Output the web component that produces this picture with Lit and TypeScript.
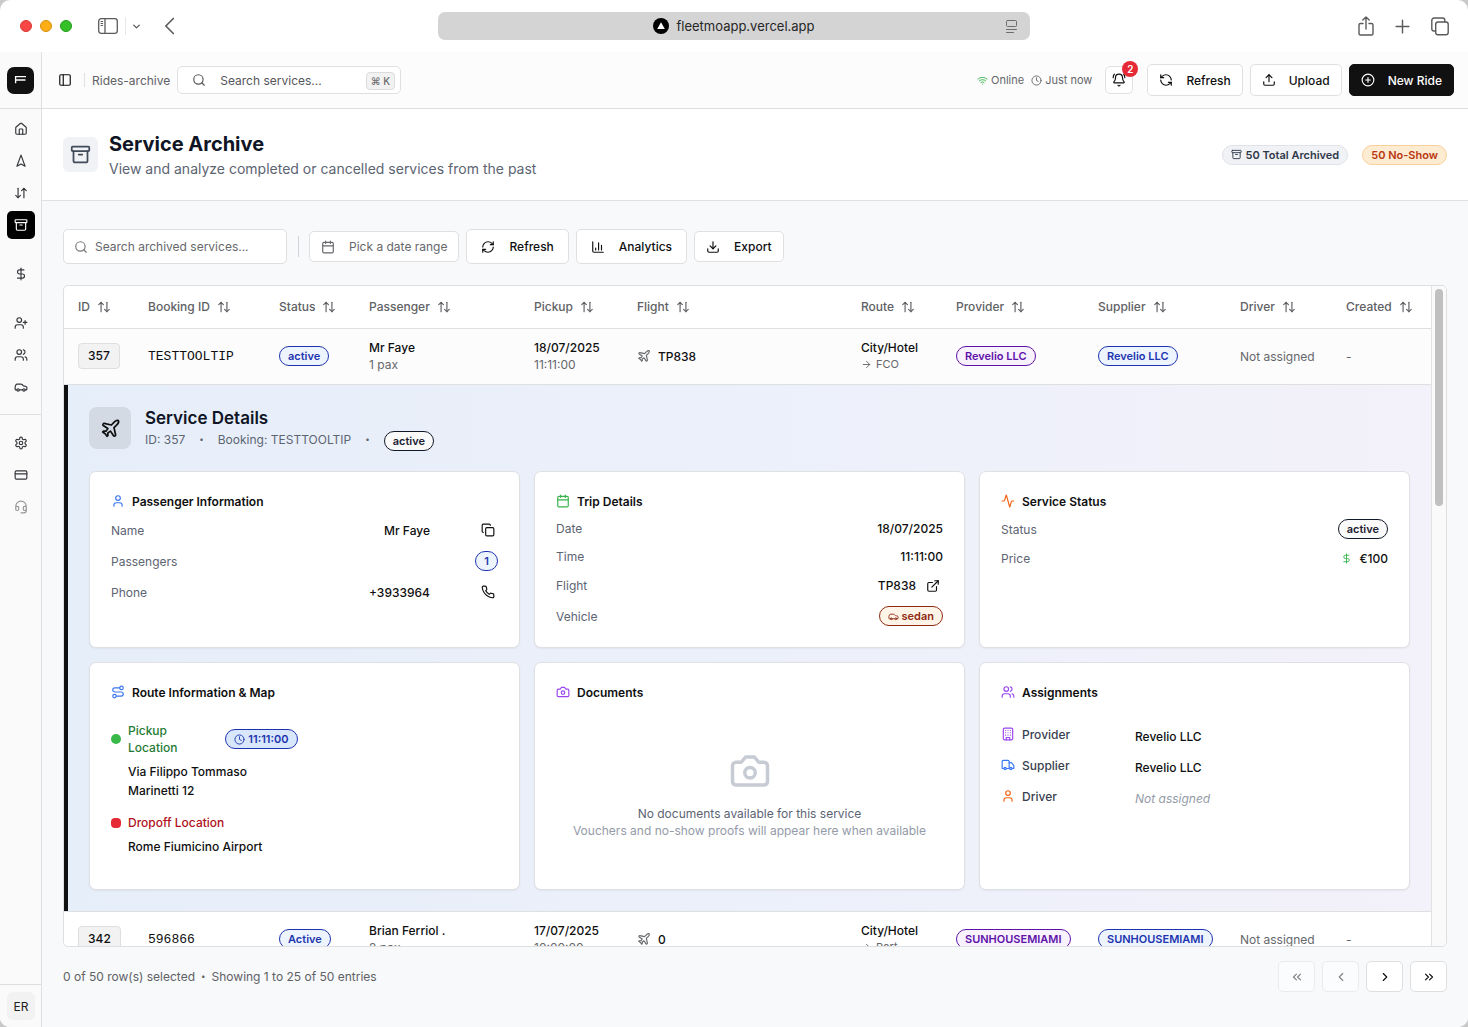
import { LitElement, html, css, svg, nothing } from "lit";
import type { TemplateResult } from "lit";
import { customElement, property } from "lit/decorators.js";

const ICONS: Record<string, TemplateResult> = {
  home: svg`<path d="M15 21v-8a1 1 0 0 0-1-1h-4a1 1 0 0 0-1 1v8"/><path d="M3 10a2 2 0 0 1 .709-1.528l7-5.999a2 2 0 0 1 2.582 0l7 5.999A2 2 0 0 1 21 10v9a2 2 0 0 1-2 2H5a2 2 0 0 1-2-2z"/>`,
  navigation: svg`<path d="m12 2 7 19-7-4-7 4z"/>`,
  arrowDownUp: svg`<path d="m3 16 4 4 4-4"/><path d="M7 20V4"/><path d="m21 8-4-4-4 4"/><path d="M17 4v16"/>`,
  sort: svg`<path d="m21 16-4 4-4-4"/><path d="M17 20V4"/><path d="m3 8 4-4 4 4"/><path d="M7 4v16"/>`,
  archive: svg`<rect width="20" height="5" x="2" y="3" rx="1"/><path d="M4 8v11a2 2 0 0 0 2 2h12a2 2 0 0 0 2-2V8"/><path d="M10 12h4"/>`,
  dollar: svg`<path d="M12 2v20"/><path d="M17 5H9.500a3.500 3.500 0 0 0 0 7h5a3.500 3.500 0 0 1 0 7H6"/>`,
  userPlus: svg`<path d="M16 21v-2a4 4 0 0 0-4-4H6a4 4 0 0 0-4 4v2"/><circle cx="9" cy="7" r="4"/><path d="M19 8v6M22 11h-6"/>`,
  users: svg`<path d="M16 21v-2a4 4 0 0 0-4-4H6a4 4 0 0 0-4 4v2"/><circle cx="9" cy="7" r="4"/><path d="M22 21v-2a4 4 0 0 0-3-3.870"/><path d="M16 3.130a4 4 0 0 1 0 7.750"/>`,
  user: svg`<path d="M19 21v-2a4 4 0 0 0-4-4H9a4 4 0 0 0-4 4v2"/><circle cx="12" cy="7" r="4"/>`,
  car: svg`<path d="M19 17h2c.6 0 1-.4 1-1v-3c0-.9-.7-1.700-1.500-1.900C18.700 10.600 16 10 16 10s-1.300-1.400-2.200-2.300c-.5-.4-1.100-.7-1.800-.7H5c-.6 0-1.100.4-1.400.9l-1.400 2.900A3.700 3.700 0 0 0 2 12v4c0 .6.4 1 1 1h2"/><circle cx="7" cy="17" r="2"/><path d="M9 17h6"/><circle cx="17" cy="17" r="2"/>`,
  settings: svg`<path d="M12.220 2h-.44a2 2 0 0 0-2 2v.18a2 2 0 0 1-1 1.730l-.43.25a2 2 0 0 1-2 0l-.15-.08a2 2 0 0 0-2.730.73l-.22.38a2 2 0 0 0 .73 2.730l.15.1a2 2 0 0 1 1 1.720v.51a2 2 0 0 1-1 1.740l-.15.09a2 2 0 0 0-.73 2.730l.22.38a2 2 0 0 0 2.730.73l.15-.08a2 2 0 0 1 2 0l.43.25a2 2 0 0 1 1 1.730V20a2 2 0 0 0 2 2h.44a2 2 0 0 0 2-2v-.18a2 2 0 0 1 1-1.730l.43-.25a2 2 0 0 1 2 0l.15.08a2 2 0 0 0 2.730-.73l.22-.39a2 2 0 0 0-.73-2.730l-.15-.08a2 2 0 0 1-1-1.740v-.5a2 2 0 0 1 1-1.740l.15-.09a2 2 0 0 0 .73-2.730l-.22-.38a2 2 0 0 0-2.730-.73l-.15.08a2 2 0 0 1-2 0l-.43-.25a2 2 0 0 1-1-1.730V4a2 2 0 0 0-2-2z"/><circle cx="12" cy="12" r="3"/>`,
  card: svg`<rect width="20" height="14" x="2" y="5" rx="2"/><path d="M2 10h20"/>`,
  headset: svg`<path d="M3 11h3a2 2 0 0 1 2 2v3a2 2 0 0 1-2 2H5a2 2 0 0 1-2-2v-5Zm0 0a9 9 0 1 1 18 0m0 0v5a2 2 0 0 1-2 2h-1a2 2 0 0 1-2-2v-3a2 2 0 0 1 2-2h3Z"/><path d="M21 16v2a4 4 0 0 1-4 4h-5"/>`,
  panel: svg`<rect width="18" height="18" x="3" y="3" rx="2"/><path d="M9 3v18"/>`,
  search: svg`<circle cx="11" cy="11" r="8"/><path d="m21 21-4.300-4.300"/>`,
  wifi: svg`<path d="M12 20h.01"/><path d="M2 8.820a15 15 0 0 1 20 0"/><path d="M5 12.860a10 10 0 0 1 14 0"/><path d="M8.500 16.430a5 5 0 0 1 7 0"/>`,
  clock: svg`<circle cx="12" cy="12" r="10"/><path d="M12 6v6l4 2"/>`,
  bell: svg`<path d="M10.270 21a2 2 0 0 0 3.460 0"/><path d="M22 8c0-2.300-.8-4.300-2-6"/><path d="M3.260 15.330A1 1 0 0 0 4 17h16a1 1 0 0 0 .74-1.670C19.410 13.960 18 12.500 18 8A6 6 0 0 0 6 8c0 4.500-1.410 5.960-2.740 7.330"/><path d="M4 2C2.800 3.700 2 5.700 2 8"/>`,
  refreshCcw: svg`<path d="M21 12a9 9 0 0 0-9-9 9.750 9.750 0 0 0-6.740 2.740L3 8"/><path d="M3 3v5h5"/><path d="M3 12a9 9 0 0 0 9 9 9.750 9.750 0 0 0 6.740-2.740L21 16"/><path d="M16 16h5v5"/>`,
  refreshCw: svg`<path d="M3 12a9 9 0 0 1 9-9 9.750 9.750 0 0 1 6.740 2.740L21 8"/><path d="M21 3v5h-5"/><path d="M21 12a9 9 0 0 1-9 9 9.750 9.750 0 0 1-6.740-2.740L3 16"/><path d="M8 16H3v5"/>`,
  upload: svg`<path d="M21 15v4a2 2 0 0 1-2 2H5a2 2 0 0 1-2-2v-4"/><path d="m17 8-5-5-5 5"/><path d="M12 3v12"/>`,
  download: svg`<path d="M21 15v4a2 2 0 0 1-2 2H5a2 2 0 0 1-2-2v-4"/><path d="m7 10 5 5 5-5"/><path d="M12 15V3"/>`,
  plusCircle: svg`<circle cx="12" cy="12" r="10"/><path d="M8 12h8M12 8v8"/>`,
  calendar: svg`<path d="M8 2v4M16 2v4"/><rect width="18" height="18" x="3" y="4" rx="2"/><path d="M3 10h18"/>`,
  chart: svg`<path d="M3 3v16a2 2 0 0 0 2 2h16"/><path d="M18 17V9M13 17V5M8 17v-3"/>`,
  plane: svg`<path d="M17.800 19.200 16 11l3.500-3.500C21 6 21.500 4 21 3c-1-.5-3 0-4.500 1.500L13 8 4.800 6.200c-.5-.1-.9.1-1.100.5l-.3.5c-.2.5-.1 1 .3 1.300L9 12l-2 3H4l-1 1 3 2 2 3 1-1v-3l3-2 3.500 5.300c.3.4.8.5 1.300.3l.5-.2c.4-.3.6-.7.5-1.200z"/>`,
  arrowRight: svg`<path d="M5 12h14"/><path d="m12 5 7 7-7 7"/>`,
  copy: svg`<rect width="14" height="14" x="8" y="8" rx="2"/><path d="M4 16c-1.100 0-2-.9-2-2V4c0-1.100.9-2 2-2h10c1.100 0 2 .9 2 2"/>`,
  phone: svg`<path d="M22 16.920v3a2 2 0 0 1-2.180 2 19.790 19.790 0 0 1-8.630-3.070 19.500 19.500 0 0 1-6-6 19.790 19.790 0 0 1-3.070-8.670A2 2 0 0 1 4.110 2h3a2 2 0 0 1 2 1.720 12.840 12.840 0 0 0 .7 2.810 2 2 0 0 1-.45 2.110L8.090 9.910a16 16 0 0 0 6 6l1.270-1.270a2 2 0 0 1 2.110-.45 12.840 12.840 0 0 0 2.810.7A2 2 0 0 1 22 16.920z"/>`,
  external: svg`<path d="M15 3h6v6"/><path d="M10 14 21 3"/><path d="M18 13v6a2 2 0 0 1-2 2H5a2 2 0 0 1-2-2V8a2 2 0 0 1 2-2h6"/>`,
  activity: svg`<path d="M22 12h-2.480a2 2 0 0 0-1.930 1.460l-2.350 8.360a.25.25 0 0 1-.48 0L9.240 2.180a.25.25 0 0 0-.48 0l-2.350 8.360A2 2 0 0 1 4.490 12H2"/>`,
  route: svg`<circle cx="6" cy="19" r="3"/><path d="M9 19h8.500a3.500 3.500 0 0 0 0-7h-11a3.500 3.500 0 0 1 0-7H15"/><circle cx="18" cy="5" r="3"/>`,
  camera: svg`<path d="M14.500 4h-5L7 7H4a2 2 0 0 0-2 2v9a2 2 0 0 0 2 2h16a2 2 0 0 0 2-2V9a2 2 0 0 0-2-2h-3l-2.500-3z"/><circle cx="12" cy="13" r="3"/>`,
  building: svg`<rect width="16" height="20" x="4" y="2" rx="2"/><path d="M9 22v-4h6v4"/><path d="M8 6h.01M16 6h.01M12 6h.01M12 10h.01M12 14h.01M16 10h.01M16 14h.01M8 10h.01M8 14h.01"/>`,
  truck: svg`<path d="M14 18V6a2 2 0 0 0-2-2H4a2 2 0 0 0-2 2v11a1 1 0 0 0 1 1h2"/><path d="M15 18H9"/><path d="M19 18h2a1 1 0 0 0 1-1v-3.650a1 1 0 0 0-.22-.624l-3.480-4.350A1 1 0 0 0 17.520 8H14"/><circle cx="17" cy="18" r="2"/><circle cx="7" cy="18" r="2"/>`,
  first: svg`<path d="m11 17-5-5 5-5"/><path d="m18 17-5-5 5-5"/>`,
  prev: svg`<path d="m15 18-6-6 6-6"/>`,
  next: svg`<path d="m9 18 6-6-6-6"/>`,
  last: svg`<path d="m6 17 5-5-5-5"/><path d="m13 17 5-5-5-5"/>`,
  down: svg`<path d="m6 9 6 6 6-6"/>`,
  back: svg`<path d="m16 3-9 9 9 9"/>`,
  plus: svg`<path d="M3 12h18M12 3v18"/>`,
};

@customElement("ui-icon")
export class UiIcon extends LitElement {
  @property() name = "";
  @property({ type: Number }) size = 14;
  @property({ type: Number }) weight = 2;

  static styles = css`
    :host { display: inline-flex; flex: none; }
    svg { display: block; fill: none; stroke: currentColor; stroke-linecap: round; stroke-linejoin: round; }
  `;

  render() {
    return html`<svg width=${this.size} height=${this.size} viewBox="0 0 24 24" stroke-width=${this.weight} aria-hidden="true">${ICONS[this.name] ?? nothing}</svg>`;
  }
}

const icon = (name: string, size = 14, cls = "", weight = 2) =>
  html`<ui-icon class=${cls} name=${name} .size=${size} .weight=${weight}></ui-icon>`;

const COLUMNS = [
  { label: "ID", span: 70 },
  { label: "Booking ID", span: 131 },
  { label: "Status", span: 90 },
  { label: "Passenger", span: 165 },
  { label: "Pickup", span: 103 },
  { label: "Flight", span: 224 },
  { label: "Route", span: 95 },
  { label: "Provider", span: 142 },
  { label: "Supplier", span: 142 },
  { label: "Driver", span: 106 },
  { label: "Created", span: 99 },
];
const TOTAL_SPAN = COLUMNS.reduce((sum, c) => sum + c.span, 0);

interface Ride {
  id: string; booking: string; status: string; passenger: string; pax: string; date: string; time: string;
  flight: string; from: string; to: string; partner: string; open?: boolean;
}

const RIDES: Ride[] = [
  { id: "357", booking: "TESTTOOLTIP", status: "active", passenger: "Mr Faye", pax: "1 pax", date: "18/07/2025", time: "11:11:00", flight: "TP838", from: "City/Hotel", to: "FCO", partner: "Revelio LLC", open: true },
  { id: "342", booking: "596866", status: "Active", passenger: "Brian Ferriol .", pax: "2 pax", date: "17/07/2025", time: "10:00:00", flight: "0", from: "City/Hotel", to: "Port", partner: "SUNHOUSEMIAMI" },
];

const NAV_TOP = [
  [["home", "Home"], ["navigation", "Dispatch"], ["arrowDownUp", "Rides"], ["archive", "Archive"]],
  [["dollar", "Finance"]],
  [["userPlus", "Invite"], ["users", "Team"], ["car", "Vehicles"]],
];
const NAV_BOTTOM = [["settings", "Settings"], ["card", "Billing"], ["headset", "Support"]];

@customElement("app-root")
export class AppRoot extends LitElement {
  static styles = css`
    :host {
      display: block; height: 100vh; background: #c9c9c9; color: #0f0f10;
      font: 400 12px/17px Inter, "Liberation Sans", sans-serif;
    }
    *, *::before, *::after { box-sizing: border-box; }
    button, input { font: inherit; color: inherit; }
    button { display: inline-flex; align-items: center; padding: 0; border: 0; background: none; cursor: pointer; white-space: nowrap; }
    h1, h2, h3, p, dl, dd, dt { margin: 0; font-weight: inherit; font-size: inherit; }
    a { color: inherit; text-decoration: none; }

    .window { display: flex; flex-direction: column; height: 100%; border-radius: 10px; overflow: hidden; background: #fff; }

    .chrome { flex: none; display: grid; grid-template-columns: 1fr minmax(0, 592px) 1fr; align-items: center; height: 52px; color: #5a5a5a; }
    .chrome-left { display: flex; align-items: center; padding-left: 20px; }
    .lights { display: flex; gap: 8px; margin-right: 26px; }
    .light { width: 12px; height: 12px; border-radius: 50%; border: 1px solid #d8372f; background: #fb4646; }
    .light.amber { background: #fdae15; border-color: #d68e0e; }
    .light.green { background: #34c127; border-color: #229b18; }
    .chrome-rule { width: 1px; height: 18px; margin: 0 5px 0 7px; background: #e8e8e8; }
    .back { margin-left: 18px; }
    .address { display: flex; align-items: center; justify-content: center; position: relative; height: 28px; border-radius: 7px; background: #d4d4d4; color: #262626; font-size: 13px; gap: 7px; }
    .reader { position: absolute; right: 12px; top: 8px; color: #6d6d6d; }
    .chrome-right { display: flex; align-items: center; justify-content: flex-end; gap: 20px; padding-right: 19px; }
    .glyph { display: block; fill: none; stroke: currentColor; stroke-linecap: round; stroke-linejoin: round; }

    .app { flex: 1; min-height: 0; display: flex; background: #f8f9fb; }

    .sidebar { flex: none; width: 42px; display: flex; flex-direction: column; background: #fafafa; border-right: 1px solid #dedfe1; color: #35373b; }
    .brand { height: 57px; display: flex; align-items: center; justify-content: center; border-bottom: 1px solid #dedfe1; }
    .logo { width: 27px; height: 27px; border-radius: 7px; background: #111; }
    .nav { display: flex; flex-direction: column; gap: 21px; padding: 6px 6px 13px 7px; }
    .nav-foot { border-top: 1px solid #dedfe1; padding-top: 14px; }
    .nav-group { display: flex; flex-direction: column; gap: 4px; }
    .nav a { width: 28px; height: 28px; display: flex; align-items: center; justify-content: center; border-radius: 5px; }
    .nav a.current { background: #000; color: #fff; }
    .nav a.faded { color: #96979a; }
    .account { margin-top: auto; padding: 7px 6px 7px 7px; border-top: 1px solid #dedfe1; }
    .avatar { width: 28px; height: 28px; border-radius: 6px; background: #f2f2f2; justify-content: center; color: #222; }

    .main { flex: 1; min-width: 0; display: flex; flex-direction: column; }
    .topbar { flex: none; height: 57px; display: flex; align-items: center; gap: 7px; padding: 0 14px 0 16px; background: #fcfcfc; border-bottom: 1px solid #dedfe1; }
    .topbar-rule { width: 1px; height: 14px; background: #e0e0e0; margin-left: 5px; }
    .crumb { color: #606165; }
    .quick { width: 224px; height: 28px; padding: 0 5px 0 14px; border: 1px solid #e0e0e2; border-radius: 5px; background: #fff; color: #55565a; gap: 14px; }
    .quick kbd { margin-left: auto; margin-top: 2px; height: 18px; padding: 0 4px; border: 1px solid #dcdcdc; border-radius: 4px; background: #f2f2f2; font: 500 10px/16px Inter, "DejaVu Sans", sans-serif; color: #6b6b6b; }
    .health { margin-left: auto; display: flex; align-items: center; gap: 3px; color: #66676b; font-size: 11px; margin-right: 6px; }
    .health .clock { margin-left: 4px; }
    .green-text { color: #36b34a; }
    .bell { position: relative; width: 28px; height: 28px; justify-content: center; border: 1px solid #e0e0e2; border-radius: 5px; background: #fff; margin-right: 7px; }
    .count { position: absolute; right: -6px; top: -6px; width: 16px; height: 16px; border-radius: 50%; background: #e62a35; color: #fff; font-weight: 600; font-size: 10px; line-height: 16px; text-align: center; }
    .btn { height: 35px; padding: 0 14px; gap: 14px; border: 1px solid #e0e0e2; border-radius: 5px; background: #fff; font-weight: 500; }
    .btn.mid { height: 32px; padding: 0 11px; gap: 13px; }
    .btn.small { height: 31px; padding: 0 11px; }
    .btn.dark { background: #111; border-color: #111; color: #fff; }
    .btn.muted { color: #66676b; font-weight: 400; }

    .page-head { flex: none; display: flex; align-items: center; gap: 11px; padding: 21px; background: #fff; border-bottom: 1px solid #dfe1e6; }
    .page-icon { width: 35px; height: 35px; display: flex; align-items: center; justify-content: center; border-radius: 6px; background: #f0f2f5; color: #414b5a; }
    .page-head h1 { font-size: 20px; line-height: 28px; font-weight: 700; color: #101525; }
    .page-head p { font-size: 14px; line-height: 21px; color: #5c6472; }
    .totals { margin-left: auto; display: flex; gap: 14px; }

    .badge { display: inline-flex; align-items: center; gap: 3px; height: 20px; padding: 0 8px; border: 1px solid #111827; border-radius: 10px; font-size: 11px; line-height: 16px; font-weight: 600; color: #1a2130; background: #fafafb; white-space: nowrap; }
    .badge.blue { border-color: #1e34ae; background: #edf4fe; color: #1e34ae; }
    .badge.time { border-color: #1e34ae; background: #d9e7fd; color: #1e34ae; }
    .badge.purple { border-color: #5f12a8; background: #f8f1fe; color: #5f12a8; }
    .badge.rust { border-color: #8f2a12; background: #fef4e8; color: #8f2a12; }
    .badge.slate { border-color: #dfe2e8; background: #f1f2f6; color: #2f394a; }
    .badge.peach { border-color: #fad09a; background: #fdebd2; color: #b93810; }

    .content { flex: 1; min-height: 0; display: flex; flex-direction: column; padding: 28px 21px 35px; }
    .tools { display: flex; align-items: center; gap: 7px; margin-bottom: 21px; }
    .find { display: flex; align-items: center; gap: 7px; width: 224px; height: 35px; padding: 0 10px; border: 1px solid #dedfe1; border-radius: 5px; background: #fff; color: #77787b; }
    .find input { flex: 1; min-width: 0; padding: 0; border: 0; outline: 0; background: none; }
    .find input::placeholder { color: #66676b; opacity: 1; }
    .tools-rule { width: 1px; height: 21px; background: #cfd3da; margin: 0 3px 0 4px; }

    .panel { flex: 1; min-height: 0; display: flex; border: 1px solid #dedfe1; border-radius: 5px; background: #fff; overflow: hidden; }
    .rows { flex: 1; min-width: 0; overflow: hidden; }
    .track { flex: none; width: 15px; padding: 3px 3px 0 3px; border-left: 1px solid #e2e2e2; background: #fafafa; }
    .thumb { width: 8px; height: 217px; border-radius: 4px; background: #c0c0c0; }

    table { width: 100%; table-layout: fixed; border-collapse: separate; border-spacing: 0; }
    th, td { padding: 0 0 0 14px; text-align: left; border-bottom: 1px solid #dedfe1; white-space: nowrap; }
    th { height: 43px; padding-bottom: 1px; font-weight: 500; color: #606165; }
    th button { gap: 7px; }
    td { height: 56px; padding-bottom: 1px; }
    tr.open td { background: #fcfcfc; }
    .chip { display: inline-block; padding: 3px 9px 4px; border: 1px solid #dfdfdf; border-radius: 4px; background: #f2f2f2; font-weight: 500; }
    .mono { font-family: "Liberation Mono", monospace; font-size: 13px; }
    .strong { font-weight: 500; }
    .muted { color: #66676b; }
    .line { display: flex; align-items: center; gap: 7px; }
    .dest { display: flex; align-items: center; gap: 4px; font-size: 11px; color: #66676b; }
    .dot { font-size: 8px; }

    .detail td.cell { height: auto; padding: 0; white-space: normal; }
    .detail-body { border-left: 4px solid #111; padding: 21px; background: linear-gradient(90deg, #e6eef9, #ecf0fa 50%, #f3f1fa); }
    .detail-head { display: flex; gap: 14px; margin: 1px 0 22px; }
    .detail-icon { width: 42px; height: 42px; display: flex; align-items: center; justify-content: center; border-radius: 8px; background: #d3dae4; }
    .detail-head h2 { font-size: 17px; line-height: 22px; font-weight: 600; color: #101525; }
    .meta { display: flex; align-items: center; gap: 14px; height: 20px; color: #5c6472; }
    .meta .badge { margin-top: 3px; }
    .cards { display: grid; grid-template-columns: repeat(3, minmax(0, 1fr)); gap: 14px; }
    .card { padding: 21px; border: 1px solid #dfe0e3; border-radius: 7px; background: #fff; box-shadow: 0 1px 2px #0000000d; }
    .card h3 { display: flex; align-items: center; gap: 7px; height: 16px; font-weight: 600; }
    .facts { display: flex; flex-direction: column; gap: 10px; margin-top: 10px; }
    .fact { display: flex; align-items: center; justify-content: space-between; min-height: 18px; }
    .fact.tall { min-height: 22px; }
    .fact dt { color: #5c6472; }
    .fact dd { display: flex; align-items: center; gap: 7px; font-weight: 500; }
    .fact dd.wide { gap: 48px; }
    .fact button { width: 20px; height: 21px; justify-content: center; }
    .c-blue { color: #3b77f2; }
    .c-green { color: #36b34a; }
    .c-orange { color: #f26418; }
    .c-purple { color: #9a44f0; }

    .route { display: grid; grid-template-columns: 1fr 1fr; gap: 14px; margin-top: 22px; }
    .stops { display: flex; flex-direction: column; gap: 14px; }
    .stop { display: grid; grid-template-columns: 10px minmax(0, 1fr) auto; column-gap: 7px; row-gap: 6px; align-items: center; }
    .stop .pin { width: 10px; height: 10px; border-radius: 50%; background: #38b948; }
    .stop .pin.end { border-radius: 4px; background: #e62a35; }
    .stop .name { color: #1f7a34; font-weight: 500; }
    .stop .name.short { padding-right: 14px; }
    .stop .name.end { color: #b01020; }
    .stop .place { grid-column: 2 / -1; line-height: 19px; font-weight: 500; }

    .empty { display: flex; flex-direction: column; align-items: center; margin-top: 22px; padding: 28px 0 29px; text-align: center; color: #5c6472; }
    .empty .big { color: #c7cbd3; margin-bottom: 13px; }
    .empty .faint { color: #949ba8; }

    .people { display: flex; flex-direction: column; gap: 7px; margin-top: 22px; }
    .person { display: grid; grid-template-columns: 120px 1fr; gap: 14px; align-items: center; height: 24px; }
    .person dt { display: flex; align-items: center; gap: 7px; color: #38414f; font-weight: 500; }
    .person dd { padding-top: 5px; font-weight: 500; }
    .person dd.none { font-style: italic; font-weight: 400; color: #949ba8; }

    .foot { flex: none; display: flex; align-items: center; margin-top: 14px; color: #606165; }
    .foot .dot { margin: 0 6px; }
    .pager { margin-left: auto; display: flex; gap: 7px; }
    .pager button { width: 37px; height: 31px; justify-content: center; border: 1px solid #dedfe1; border-radius: 5px; background: #fff; color: #111; }
    .pager button:disabled { opacity: 0.5; }
  `;

  private chrome() {
    return html`<header class="chrome">
      <div class="chrome-left">
        <div class="lights"><span class="light"></span><span class="light amber"></span><span class="light green"></span></div>
        <button aria-label="Toggle sidebar">
          <svg class="glyph" width="20" height="16" viewBox="0 0 20 16" stroke-width="1.300"><rect x="0.700" y="0.700" width="18.600" height="14.600" rx="2.500"/><path d="M7 1v14"/><path stroke-width="1" d="M3 3.500h1.700M3 5.500h1.700M3 7.500h1.700"/></svg>
        </button>
        <span class="chrome-rule"></span>
        <button aria-label="Tab groups">${icon("down", 11, "", 3)}</button>
        <button class="back" aria-label="Back">${icon("back", 20, "", 2)}</button>
      </div>
      <div class="address">
        <svg width="16" height="16" viewBox="0 0 16 16"><circle cx="8" cy="8" r="8" fill="#000"/><path d="M8 4.200 11.800 11H4.200z" fill="#fff"/></svg>
        <span>fleetmoapp.vercel.app</span>
        <svg class="glyph reader" width="12" height="13" viewBox="0 0 12 13" stroke-width="1"><rect x="0.500" y="0.500" width="10" height="6" rx="1"/><path d="M0.500 9.500h10M0.500 12.500h7"/></svg>
      </div>
      <div class="chrome-right">
        <button aria-label="Share"><svg class="glyph" width="16" height="20" viewBox="0 0 16 20" stroke-width="1.400"><path d="M5 7.500H2.500a1.500 1.500 0 0 0-1.500 1.500v8.500A1.500 1.500 0 0 0 2.500 19h11a1.500 1.500 0 0 0 1.500-1.500V9a1.500 1.500 0 0 0-1.500-1.500H11M8 13V1M4.800 4 8 1l3.200 3"/></svg></button>
        <button aria-label="New tab">${icon("plus", 17, "", 2)}</button>
        <button aria-label="Tab overview"><svg class="glyph" width="18" height="19" viewBox="0 0 18 19" stroke-width="1.400"><rect x="4.700" y="5" width="12.500" height="12.800" rx="2.300"/><path d="M4.500 14H3a2.200 2.200 0 0 1-2.200-2.200V3.200A2.200 2.200 0 0 1 3 1h8.600A2.200 2.200 0 0 1 13.800 3.200v1.500"/></svg></button>
      </div>
    </header>`;
  }

  private sidebar() {
    const link = ([name, label]: string[]) => html`<a href="#${name}" aria-label=${label} class=${name === "archive" ? "current" : name === "headset" ? "faded" : ""}>${icon(name)}</a>`;
    return html`<aside class="sidebar">
      <div class="brand">
        <svg class="logo" viewBox="0 0 27 27" fill="none" stroke="#fff" stroke-width="1.300"><path d="M8.600 16.200V9.600H19M9 13H18.500"/></svg>
      </div>
      <nav class="nav">${NAV_TOP.map((group) => html`<div class="nav-group">${group.map(link)}</div>`)}</nav>
      <nav class="nav nav-foot"><div class="nav-group">${NAV_BOTTOM.map(link)}</div></nav>
      <div class="account"><button class="avatar">ER</button></div>
    </aside>`;
  }

  private topbar() {
    return html`<div class="topbar">
      <button aria-label="Toggle menu">${icon("panel")}</button>
      <span class="topbar-rule"></span>
      <span class="crumb">Rides-archive</span>
      <button class="quick">${icon("search")}<span>Search services...</span><kbd>⌘ K</kbd></button>
      <div class="health">
        ${icon("wifi", 11, "green-text")}<span>Online</span>
        ${icon("clock", 11, "clock")}<span>Just now</span>
      </div>
      <button class="bell" aria-label="Notifications">${icon("bell")}<span class="count">2</span></button>
      <button class="btn mid">${icon("refreshCcw")}Refresh</button>
      <button class="btn mid">${icon("upload")}Upload</button>
      <button class="btn mid dark">${icon("plusCircle")}New Ride</button>
    </div>`;
  }

  private row(r: Ride) {
    return html`<tr class=${r.open ? "open" : ""}>
        <td><span class="chip">${r.id}</span></td>
        <td class="mono">${r.booking}</td>
        <td><span class="badge blue">${r.status}</span></td>
        <td><div class="strong">${r.passenger}</div><div class="muted">${r.pax}</div></td>
        <td><div class="strong">${r.date}</div><div class="muted">${r.time}</div></td>
        <td><span class="line strong">${icon("plane", 14, "muted")}${r.flight}</span></td>
        <td><div class="strong">${r.from}</div><div class="dest">${icon("arrowRight", 11)}${r.to}</div></td>
        <td><span class="badge purple">${r.partner}</span></td>
        <td><span class="badge blue">${r.partner}</span></td>
        <td class="muted">Not assigned</td>
        <td class="muted">-</td>
      </tr>
      ${r.open ? this.detail(r) : nothing}`;
  }

  private detail(r: Ride) {
    return html`<tr class="detail"><td class="cell" colspan=${COLUMNS.length}>
      <div class="detail-body">
        <div class="detail-head">
          <span class="detail-icon">${icon("plane", 21)}</span>
          <div>
            <h2>Service Details</h2>
            <div class="meta"><span>ID: ${r.id}</span><span class="dot">•</span><span>Booking: ${r.booking}</span><span class="dot">•</span><span class="badge">${r.status}</span></div>
          </div>
        </div>
        <div class="cards">
          <section class="card">
            <h3>${icon("user", 14, "c-blue")}Passenger Information</h3>
            <dl class="facts">
              <div class="fact tall"><dt>Name</dt><dd class="wide">${r.passenger}<button aria-label="Copy name">${icon("copy")}</button></dd></div>
              <div class="fact"><dt>Passengers</dt><dd><span class="badge blue">1</span></dd></div>
              <div class="fact tall"><dt>Phone</dt><dd class="wide">+3933964<button aria-label="Call">${icon("phone")}</button></dd></div>
            </dl>
          </section>
          <section class="card">
            <h3>${icon("calendar", 14, "c-green")}Trip Details</h3>
            <dl class="facts">
              <div class="fact"><dt>Date</dt><dd>${r.date}</dd></div>
              <div class="fact"><dt>Time</dt><dd>${r.time}</dd></div>
              <div class="fact"><dt>Flight</dt><dd>${r.flight}<button aria-label="Open flight">${icon("external")}</button></dd></div>
              <div class="fact"><dt>Vehicle</dt><dd><span class="badge rust">${icon("car", 11)}sedan</span></dd></div>
            </dl>
          </section>
          <section class="card">
            <h3>${icon("activity", 14, "c-orange")}Service Status</h3>
            <dl class="facts">
              <div class="fact"><dt>Status</dt><dd><span class="badge">${r.status}</span></dd></div>
              <div class="fact"><dt>Price</dt><dd>${icon("dollar", 11, "c-green")}€100</dd></div>
            </dl>
          </section>
          <section class="card">
            <h3>${icon("route", 14, "c-blue")}Route Information &amp; Map</h3>
            <div class="route"><div class="stops">
              <div class="stop"><span class="pin"></span><span class="name short">Pickup Location</span><span class="badge time">${icon("clock", 11)}${r.time}</span><span class="place">Via Filippo Tommaso Marinetti 12</span></div>
              <div class="stop"><span class="pin end"></span><span class="name end">Dropoff Location</span><span class="place">Rome Fiumicino Airport</span></div>
            </div></div>
          </section>
          <section class="card">
            <h3>${icon("camera", 14, "c-purple")}Documents</h3>
            <div class="empty">${icon("camera", 42, "big")}<p>No documents available for this service</p><p class="faint">Vouchers and no-show proofs will appear here when available</p></div>
          </section>
          <section class="card">
            <h3>${icon("users", 14, "c-purple")}Assignments</h3>
            <dl class="people">
              <div class="person"><dt>${icon("building", 14, "c-purple")}Provider</dt><dd>${r.partner}</dd></div>
              <div class="person"><dt>${icon("truck", 14, "c-blue")}Supplier</dt><dd>${r.partner}</dd></div>
              <div class="person"><dt>${icon("user", 14, "c-orange")}Driver</dt><dd class="none">Not assigned</dd></div>
            </dl>
          </section>
        </div>
      </div>
    </td></tr>`;
  }

  render() {
    return html`<div class="window">
      ${this.chrome()}
      <div class="app">
        ${this.sidebar()}
        <main class="main">
          ${this.topbar()}
          <div class="page-head">
            <span class="page-icon">${icon("archive", 21)}</span>
            <div><h1>Service Archive</h1><p>View and analyze completed or cancelled services from the past</p></div>
            <div class="totals">
              <span class="badge slate">${icon("archive", 11)}50 Total Archived</span>
              <span class="badge peach">50 No-Show</span>
            </div>
          </div>
          <div class="content">
            <div class="tools">
              <label class="find">${icon("search")}<input type="text" aria-label="Search archived services" placeholder="Search archived services..." /></label>
              <span class="tools-rule"></span>
              <button class="btn small muted">${icon("calendar")}Pick a date range</button>
              <button class="btn">${icon("refreshCw")}Refresh</button>
              <button class="btn">${icon("chart")}Analytics</button>
              <button class="btn small">${icon("download")}Export</button>
            </div>
            <div class="panel">
              <div class="rows">
                <table>
                  <colgroup>${COLUMNS.map((c) => html`<col style="width:${(c.span / TOTAL_SPAN) * 100}%" />`)}</colgroup>
                  <thead><tr>${COLUMNS.map((c) => html`<th scope="col"><button>${c.label}${icon("sort")}</button></th>`)}</tr></thead>
                  <tbody>${RIDES.map((r) => this.row(r))}</tbody>
                </table>
              </div>
              <div class="track"><div class="thumb"></div></div>
            </div>
            <div class="foot">
              <span>0 of 50 row(s) selected</span><span class="dot">•</span><span>Showing 1 to 25 of 50 entries</span>
              <div class="pager">
                <button disabled aria-label="First page">${icon("first")}</button>
                <button disabled aria-label="Previous page">${icon("prev")}</button>
                <button aria-label="Next page">${icon("next")}</button>
                <button aria-label="Last page">${icon("last")}</button>
              </div>
            </div>
          </div>
        </main>
      </div>
    </div>`;
  }
}
